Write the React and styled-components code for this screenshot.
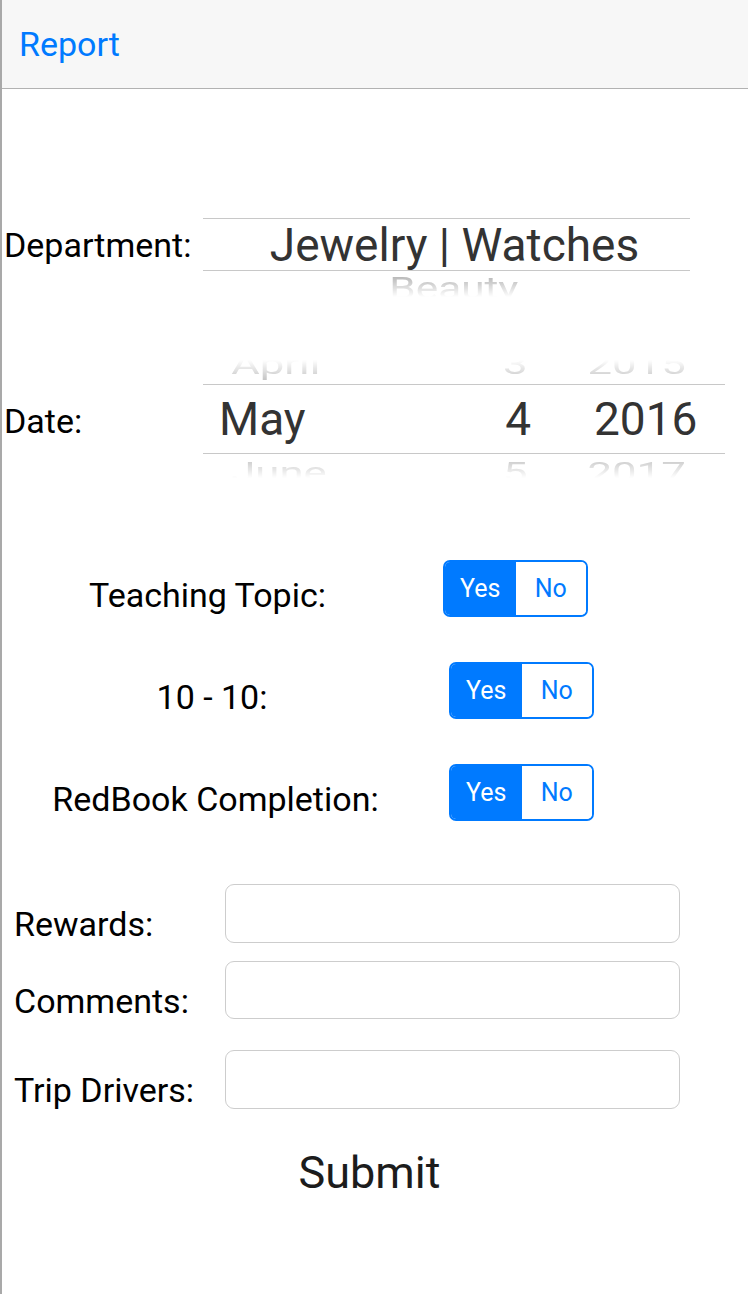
import React from "react";
import styled, { createGlobalStyle } from "styled-components";

const GlobalStyle = createGlobalStyle`
  html, body {
    margin: 0;
    padding: 0;
    background: #ffffff;
  }
  body {
    font-family: Roboto, "Liberation Sans", Arial, sans-serif;
    -webkit-font-smoothing: antialiased;
  }
`;

const Screen = styled.div`
  width: 748px;
  min-height: 1294px;
  box-sizing: border-box;
  border-left: 2px solid #a9a9a9;
  background: #ffffff;
  overflow: hidden;
`;

const NavBar = styled.header`
  height: 88px;
  background: #f7f7f7;
  border-bottom: 1px solid #b2b2b2;
  display: flex;
  align-items: center;
  padding-left: 17px;
`;

const NavTitle = styled.span`
  font-size: 34px;
  color: #007aff;
`;

/* picker rows (department / date) */
const PickerRow = styled.div`
  display: grid;
  grid-template-columns: 201px ${(p) => p.$width}px;
  align-items: center;
  margin-top: ${(p) => p.$top}px;
`;

const RowLabel = styled.div`
  font-size: 34px;
  line-height: 34px;
  color: #000000;
  padding-left: 2px;
  padding-top: ${(p) => p.$nudge || 0}px;
  white-space: nowrap;
`;

const Picker = styled.div`
  display: flex;
  flex-direction: column;
`;

const PickerEdge = styled.div`
  height: ${(p) => p.$h}px;
  overflow: hidden;
  display: flex;
  flex-direction: column;
  justify-content: ${(p) => (p.$side === "top" ? "flex-end" : "flex-start")};
  -webkit-mask-image: linear-gradient(
    ${(p) => (p.$side === "top" ? "to top" : "to bottom")},
    #000 5%,
    transparent 100%
  );
  mask-image: linear-gradient(
    ${(p) => (p.$side === "top" ? "to top" : "to bottom")},
    #000 5%,
    transparent 100%
  );
`;

const PickerBand = styled.div`
  height: ${(p) => p.$h}px;
  box-sizing: border-box;
  border-top: 1px solid #c8c8c8;
  border-bottom: 1px solid #c8c8c8;
  display: flex;
  align-items: center;
`;

const DeptText = styled.div`
  width: 100%;
  box-sizing: border-box;
  padding-left: 16px;
  text-align: center;
  font-size: 46px;
  line-height: 46px;
  color: ${(p) => (p.$faded ? "#a9a9a9" : "#333333")};
  transform: ${(p) => (p.$faded ? "scale(0.92, 0.68)" : "none")};
  transform-origin: center top;
  margin-top: ${(p) => (p.$faded ? 1 : 0)}px;
  white-space: nowrap;
`;

const DateColumns = styled.div`
  display: grid;
  grid-template-columns: 277px 51px 194px;
  width: 100%;
  flex: 0 0 auto;
  font-size: 46px;
  line-height: 46px;
  color: ${(p) => (p.$faded ? "#bdbdbd" : "#333333")};
  transform: ${(p) => (p.$faded ? "scale(0.95, 0.6)" : "none")};
  transform-origin: ${(p) => (p.$faded === "top" ? "center bottom" : "center top")};
  margin-bottom: ${(p) => (p.$faded === "top" ? 6 : 0)}px;
  margin-top: ${(p) => (p.$faded === "bottom" ? 5 : 0)}px;
  white-space: nowrap;
`;

const Month = styled.span`
  padding-left: 16px;
`;

const Day = styled.span`
  text-align: right;
`;

const Year = styled.span`
  padding-left: 63px;
`;

/* yes / no rows */
const ToggleRow = styled.div`
  display: grid;
  grid-template-columns: 420px auto;
  align-items: center;
  margin-top: ${(p) => p.$top}px;
`;

const ToggleLabel = styled.div`
  text-align: center;
  font-size: 34px;
  line-height: 34px;
  padding-top: 12px;
  padding-left: ${(p) => Math.max(p.$shift || 0, 0)}px;
  padding-right: ${(p) => Math.max(-(p.$shift || 0), 0)}px;
  color: #000000;
  white-space: nowrap;
`;

const Segmented = styled.div`
  display: flex;
  width: 145px;
  height: 57px;
  box-sizing: border-box;
  border: 2px solid #007aff;
  border-radius: 7px;
  overflow: hidden;
  margin-left: ${(p) => p.$offset}px;
`;

const Segment = styled.div`
  flex: 1;
  display: flex;
  align-items: center;
  justify-content: center;
  font-size: 25px;
  background: ${(p) => (p.$active ? "#007aff" : "#ffffff")};
  color: ${(p) => (p.$active ? "#ffffff" : "#007aff")};
`;

/* text inputs */
const FieldRow = styled.div`
  display: grid;
  grid-template-columns: 211px 455px;
  align-items: center;
  padding-left: 12px;
  margin-top: ${(p) => p.$top}px;
`;

const FieldLabel = styled.label`
  font-size: 34px;
  line-height: 34px;
  padding-top: 21px;
  color: #000000;
  white-space: nowrap;
`;

const Field = styled.input`
  height: ${(p) => p.$h}px;
  box-sizing: border-box;
  border: 1px solid #cdcdcd;
  border-radius: 9px;
  background: #ffffff;
  outline: none;
  padding: 0 12px;
  font-size: 28px;
  font-family: inherit;
`;

const SubmitWrap = styled.div`
  display: flex;
  justify-content: center;
  padding-right: 11px;
  margin-top: 37px;
`;

const SubmitButton = styled.button`
  background: none;
  border: none;
  padding: 0;
  font-family: inherit;
  font-size: 45px;
  line-height: 54px;
  color: #1c1c1c;
`;

const toggles = [
  { label: "Teaching Topic:", top: 82, offset: 21, shift: -9 },
  { label: "10 - 10:", top: 45, offset: 27, shift: 0 },
  { label: "RedBook Completion:", top: 45, offset: 27, shift: 7 },
];

const fields = [
  { label: "Rewards:", top: 63, h: 59 },
  { label: "Comments:", top: 18, h: 58 },
  { label: "Trip Drivers:", top: 31, h: 59 },
];

const YesNo = ({ offset }) => (
  <Segmented $offset={offset}>
    <Segment $active>Yes</Segment>
    <Segment>No</Segment>
  </Segmented>
);

export default function App() {
  return (
    <>
      <GlobalStyle />
      <Screen>
        <NavBar>
          <NavTitle>Report</NavTitle>
        </NavBar>

        <PickerRow $top={103} $width={487}>
          <RowLabel>Department:</RowLabel>
          <Picker>
            <PickerEdge $h={26} $side="top" />
            <PickerBand $h={53}>
              <DeptText>Jewelry | Watches</DeptText>
            </PickerBand>
            <PickerEdge $h={26} $side="bottom">
              <DeptText $faded>Beauty</DeptText>
            </PickerEdge>
          </Picker>
        </PickerRow>

        <PickerRow $top={63} $width={522}>
          <RowLabel $nudge={3}>Date:</RowLabel>
          <Picker>
            <PickerEdge $h={24} $side="top">
              <DateColumns $faded="top">
                <Month>April</Month>
                <Day>3</Day>
                <Year>2015</Year>
              </DateColumns>
            </PickerEdge>
            <PickerBand $h={70}>
              <DateColumns>
                <Month>May</Month>
                <Day>4</Day>
                <Year>2016</Year>
              </DateColumns>
            </PickerBand>
            <PickerEdge $h={24} $side="bottom">
              <DateColumns $faded="bottom">
                <Month>June</Month>
                <Day>5</Day>
                <Year>2017</Year>
              </DateColumns>
            </PickerEdge>
          </Picker>
        </PickerRow>

        {toggles.map((t) => (
          <ToggleRow key={t.label} $top={t.top}>
            <ToggleLabel $shift={t.shift}>{t.label}</ToggleLabel>
            <YesNo offset={t.offset} />
          </ToggleRow>
        ))}

        {fields.map((f) => (
          <FieldRow key={f.label} $top={f.top}>
            <FieldLabel>{f.label}</FieldLabel>
            <Field $h={f.h} type="text" />
          </FieldRow>
        ))}

        <SubmitWrap>
          <SubmitButton>Submit</SubmitButton>
        </SubmitWrap>
      </Screen>
    </>
  );
}
